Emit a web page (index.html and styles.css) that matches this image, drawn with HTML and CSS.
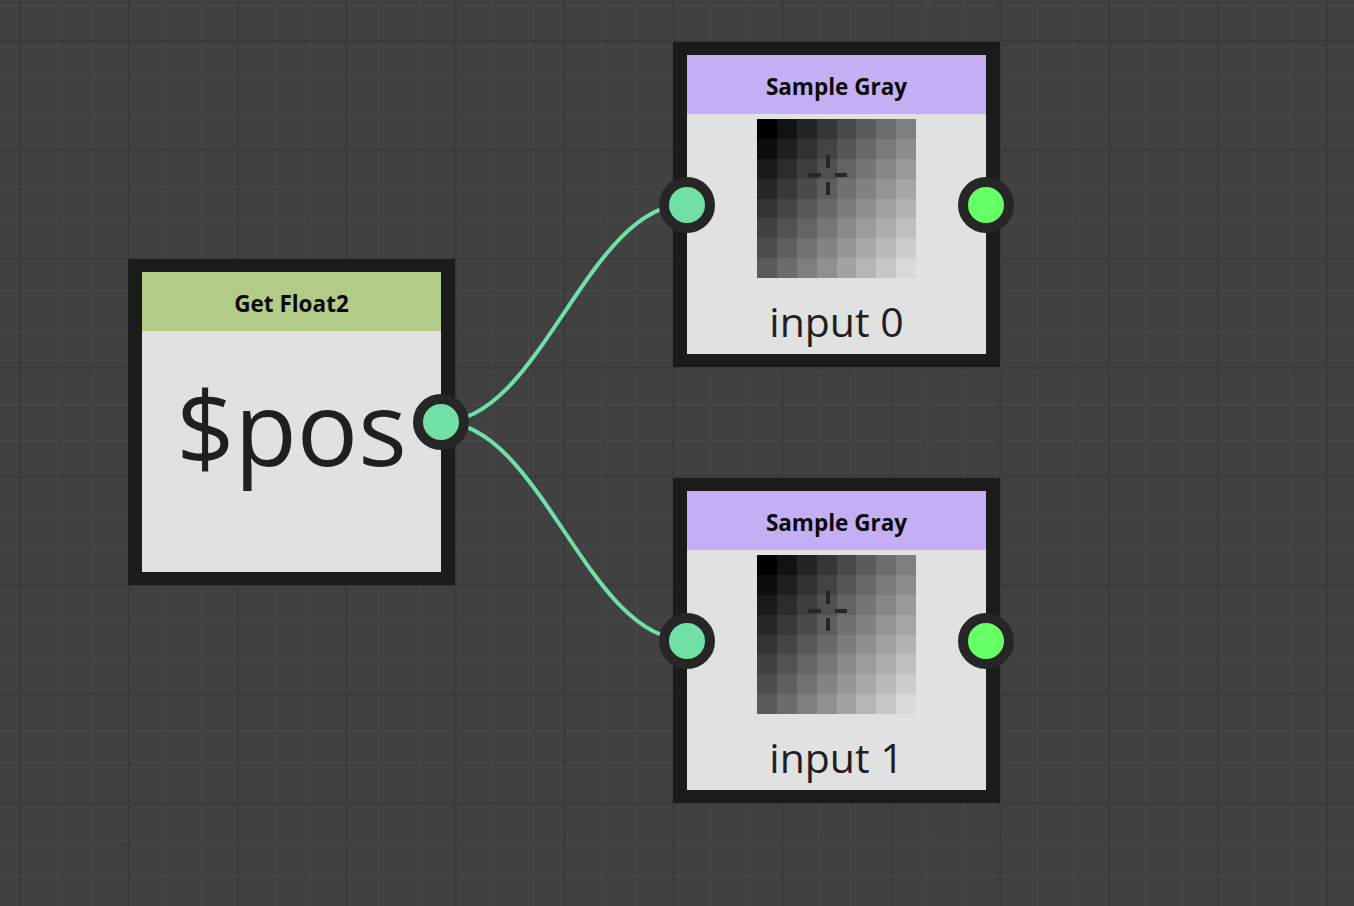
FILE: index.html
```html
<!DOCTYPE html>
<html>
<head>
<meta charset="utf-8">
<title>Node graph</title>
<link rel="stylesheet" href="styles.css">
</head>
<body>
<svg class="defs" aria-hidden="true">
  <defs>
    <symbol id="swatch" viewBox="0 0 160 160" shape-rendering="crispEdges">
      <g>
        <rect x="0" y="0" width="20" height="20" fill="#000000"/><rect x="20" y="0" width="20" height="20" fill="#121212"/><rect x="40" y="0" width="20" height="20" fill="#242424"/><rect x="60" y="0" width="20" height="20" fill="#363636"/><rect x="80" y="0" width="20" height="20" fill="#494949"/><rect x="100" y="0" width="20" height="20" fill="#5b5b5b"/><rect x="120" y="0" width="20" height="20" fill="#6d6d6d"/><rect x="140" y="0" width="20" height="20" fill="#7f7f7f"/>
        <rect x="0" y="20" width="20" height="20" fill="#0d0d0d"/><rect x="20" y="20" width="20" height="20" fill="#1f1f1f"/><rect x="40" y="20" width="20" height="20" fill="#313131"/><rect x="60" y="20" width="20" height="20" fill="#434343"/><rect x="80" y="20" width="20" height="20" fill="#565656"/><rect x="100" y="20" width="20" height="20" fill="#686868"/><rect x="120" y="20" width="20" height="20" fill="#7a7a7a"/><rect x="140" y="20" width="20" height="20" fill="#8c8c8c"/>
        <rect x="0" y="40" width="20" height="20" fill="#1a1a1a"/><rect x="20" y="40" width="20" height="20" fill="#2c2c2c"/><rect x="40" y="40" width="20" height="20" fill="#3e3e3e"/><rect x="60" y="40" width="20" height="20" fill="#505050"/><rect x="80" y="40" width="20" height="20" fill="#636363"/><rect x="100" y="40" width="20" height="20" fill="#757575"/><rect x="120" y="40" width="20" height="20" fill="#878787"/><rect x="140" y="40" width="20" height="20" fill="#999999"/>
        <rect x="0" y="60" width="20" height="20" fill="#272727"/><rect x="20" y="60" width="20" height="20" fill="#393939"/><rect x="40" y="60" width="20" height="20" fill="#4b4b4b"/><rect x="60" y="60" width="20" height="20" fill="#5d5d5d"/><rect x="80" y="60" width="20" height="20" fill="#707070"/><rect x="100" y="60" width="20" height="20" fill="#828282"/><rect x="120" y="60" width="20" height="20" fill="#949494"/><rect x="140" y="60" width="20" height="20" fill="#a6a6a6"/>
        <rect x="0" y="80" width="20" height="20" fill="#333333"/><rect x="20" y="80" width="20" height="20" fill="#454545"/><rect x="40" y="80" width="20" height="20" fill="#575757"/><rect x="60" y="80" width="20" height="20" fill="#696969"/><rect x="80" y="80" width="20" height="20" fill="#7c7c7c"/><rect x="100" y="80" width="20" height="20" fill="#8e8e8e"/><rect x="120" y="80" width="20" height="20" fill="#a0a0a0"/><rect x="140" y="80" width="20" height="20" fill="#b2b2b2"/>
        <rect x="0" y="100" width="20" height="20" fill="#404040"/><rect x="20" y="100" width="20" height="20" fill="#525252"/><rect x="40" y="100" width="20" height="20" fill="#646464"/><rect x="60" y="100" width="20" height="20" fill="#767676"/><rect x="80" y="100" width="20" height="20" fill="#898989"/><rect x="100" y="100" width="20" height="20" fill="#9b9b9b"/><rect x="120" y="100" width="20" height="20" fill="#adadad"/><rect x="140" y="100" width="20" height="20" fill="#bfbfbf"/>
        <rect x="0" y="120" width="20" height="20" fill="#4d4d4d"/><rect x="20" y="120" width="20" height="20" fill="#5f5f5f"/><rect x="40" y="120" width="20" height="20" fill="#717171"/><rect x="60" y="120" width="20" height="20" fill="#838383"/><rect x="80" y="120" width="20" height="20" fill="#969696"/><rect x="100" y="120" width="20" height="20" fill="#a8a8a8"/><rect x="120" y="120" width="20" height="20" fill="#bababa"/><rect x="140" y="120" width="20" height="20" fill="#cccccc"/>
        <rect x="0" y="140" width="20" height="20" fill="#5a5a5a"/><rect x="20" y="140" width="20" height="20" fill="#6c6c6c"/><rect x="40" y="140" width="20" height="20" fill="#7e7e7e"/><rect x="60" y="140" width="20" height="20" fill="#909090"/><rect x="80" y="140" width="20" height="20" fill="#a3a3a3"/><rect x="100" y="140" width="20" height="20" fill="#b5b5b5"/><rect x="120" y="140" width="20" height="20" fill="#c7c7c7"/><rect x="140" y="140" width="20" height="20" fill="#d9d9d9"/>
      </g>
      <g fill="#262626">
        <rect x="69" y="36" width="4" height="13"/>
        <rect x="69" y="63" width="4" height="13"/>
        <rect x="51" y="54" width="13" height="4"/>
        <rect x="78" y="54" width="13" height="4"/>
      </g>
    </symbol>
  </defs>
</svg>

<div class="canvas">
  <svg class="wires" width="1354" height="906" viewBox="0 0 1354 906">
    <path d="M441 422 C541 422, 587 204, 687 204"/>
    <path d="M441 422 C541 422, 587 640, 687 640"/>
  </svg>

  <div class="node node-get">
    <div class="node-header header-green">Get Float2</div>
    <div class="node-body body-get">
      <div class="var-name">$pos</div>
    </div>
    <span class="port port-out port-teal"></span>
  </div>

  <div class="node node-sample node-sample-a">
    <div class="node-header header-purple">Sample Gray</div>
    <div class="node-body body-sample">
      <svg class="swatch" width="159" height="159"><use href="#swatch"/></svg>
      <div class="input-label">input 0</div>
    </div>
    <span class="port port-in port-teal"></span>
    <span class="port port-out port-green"></span>
  </div>

  <div class="node node-sample node-sample-b">
    <div class="node-header header-purple">Sample Gray</div>
    <div class="node-body body-sample">
      <svg class="swatch" width="159" height="159"><use href="#swatch"/></svg>
      <div class="input-label">input 1</div>
    </div>
    <span class="port port-in port-teal"></span>
    <span class="port port-out port-green"></span>
  </div>
</div>
</body>
</html>
```
FILE: styles.css
```css
html, body {
  margin: 0;
  padding: 0;
  background: #414141;
}

body {
  font-family: "Open Sans", "Noto Sans", sans-serif;
}

.defs {
  position: absolute;
  width: 0;
  height: 0;
  overflow: hidden;
}

.canvas {
  position: relative;
  width: 1354px;
  height: 906px;
  overflow: hidden;
  background-color: #414141;
  background-image:
    linear-gradient(to right, #393939 2px, transparent 2px),
    linear-gradient(to bottom, #393939 2px, transparent 2px),
    linear-gradient(to right, #484848 1px, transparent 1px),
    linear-gradient(to bottom, #484848 1px, transparent 1px);
  background-size:
    108.92px 108.92px,
    108.92px 108.92px,
    36.307px 36.307px,
    36.307px 36.307px;
  background-position:
    19px 40px,
    19px 40px,
    20px 41px,
    20px 41px;
}

.wires {
  position: absolute;
  left: 0;
  top: 0;
}

.wires path {
  fill: none;
  stroke: #70e0a8;
  stroke-width: 4;
}

.node {
  position: absolute;
  box-sizing: content-box;
  width: 299px;
  height: 299px;
  border-style: solid;
  border-color: #1b1b1b;
  border-width: 13px 14px;
  background: #e1e1e1;
  display: flex;
  flex-direction: column;
}

.node-get {
  left: 128px;
  top: 259px;
  height: 300px;
}

.node-sample-a {
  left: 673px;
  top: 42px;
}

.node-sample-b {
  left: 673px;
  top: 478px;
}

.node-header {
  height: 59px;
  flex: none;
  display: flex;
  align-items: center;
  justify-content: center;
  font-weight: 700;
  font-size: 22.5px;
  color: #0a0a0a;
  padding-top: 3px;
  box-sizing: border-box;
}

.header-green {
  background: #b2cc88;
}

.header-purple {
  background: #c5aff4;
}

.node-body {
  flex: 1;
  display: flex;
  flex-direction: column;
  align-items: center;
}

.var-name {
  margin-top: 45px;
  font-size: 102px;
  line-height: 1;
  color: #1f1f1f;
}

.swatch {
  display: block;
  margin-top: 5px;
  flex: none;
}

.input-label {
  margin-top: 23px;
  font-size: 41px;
  line-height: 1;
  color: #1f1f1f;
}

.port {
  position: absolute;
  top: 50%;
  margin-top: -28px;
  width: 36px;
  height: 36px;
  border: 10px solid #262626;
  border-radius: 50%;
}

.port-in {
  left: -28px;
}

.port-out {
  right: -28px;
}

.port-teal {
  background: #70e0a8;
}

.port-green {
  background: #66ff66;
}
```
